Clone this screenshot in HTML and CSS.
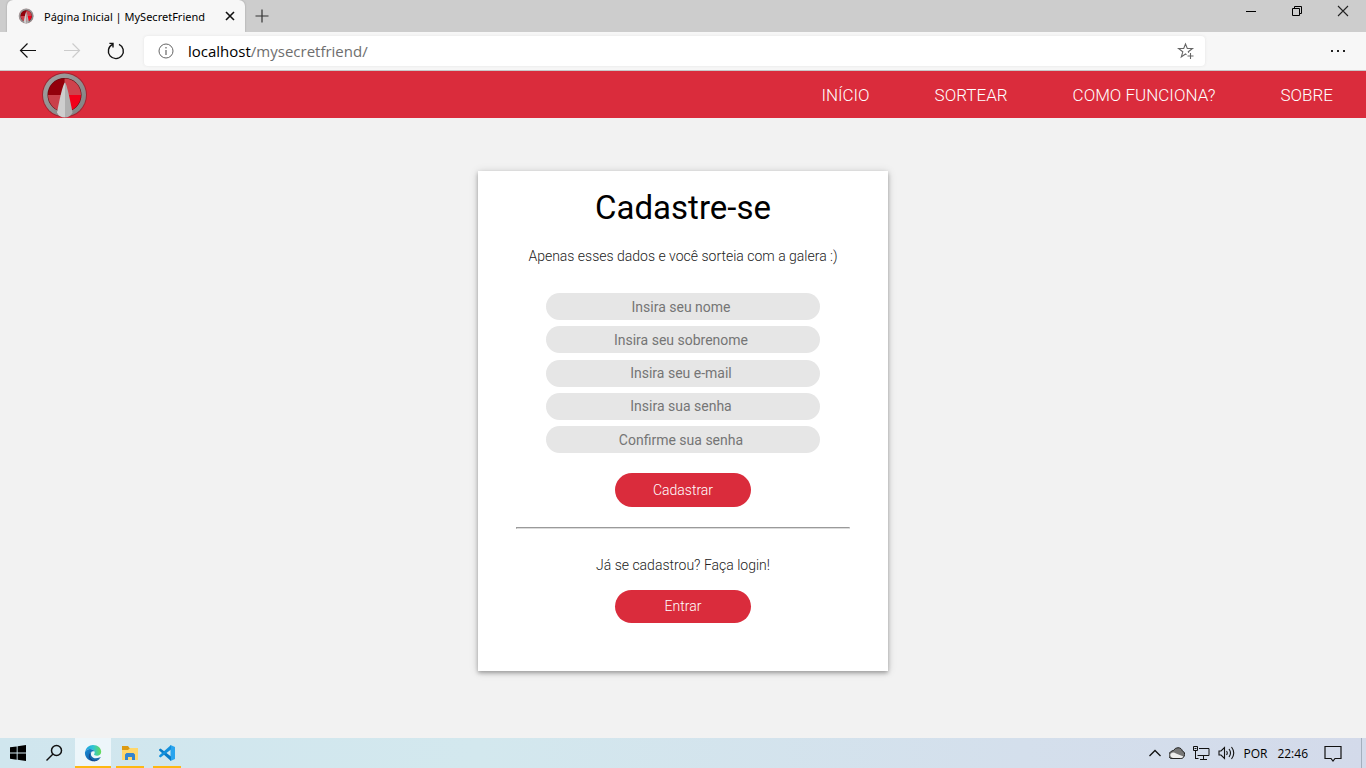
FILE: index.html
```html
<!DOCTYPE html>
<html lang="pt-BR">
<head>
<meta charset="utf-8">
<title>Página Inicial | MySecretFriend</title>
<link rel="stylesheet" href="styles.css">
</head>
<body>
<svg class="defs" width="0" height="0" aria-hidden="true">
  <defs>
    <linearGradient id="ring" x1="0" y1="0" x2="1" y2="1"><stop offset="0" stop-color="#a2a2a2"/><stop offset="1" stop-color="#808080"/></linearGradient>
    <linearGradient id="edgeTop" x1="0" y1="0" x2="1" y2="0"><stop offset="0" stop-color="#1a9de0"/><stop offset=".5" stop-color="#2fc4d4"/><stop offset="1" stop-color="#66dc55"/></linearGradient>
    <linearGradient id="edgeLow" x1="0" y1="0" x2="1" y2="1"><stop offset="0" stop-color="#1b8fd8"/><stop offset="1" stop-color="#0c4a94"/></linearGradient>
    <symbol id="compass" viewBox="0 0 48 48">
      <circle cx="24.500" cy="24" r="22.500" fill="#5b1a22" opacity=".45"/>
      <circle cx="24.500" cy="24" r="21.500" fill="url(#ring)"/>
      <circle cx="24.500" cy="24" r="17" fill="#5c070d"/>
      <path d="M24.500 24V7.500A16.500 16.500 0 0 0 8 24z" fill="#93000b"/>
      <path d="M24.500 24V7.500A16.500 16.500 0 0 1 41 24z" fill="#cf424c"/>
      <path d="M24.500 24H8A16.500 16.500 0 0 0 24.500 40.500z" fill="#c9404a"/>
      <path d="M24.500 24H41A16.500 16.500 0 0 1 24.500 40.500z" fill="#f20019"/>
      <path d="M25 11.500Q22.500 13 17 41.500 19 46.500 25 46.500z" fill="#cecece"/>
      <path d="M25 11.500Q27 13 32.500 41.500 30 46.500 25 46.500z" fill="#b0b0b0"/>
    </symbol>
  </defs>
</svg>

<div class="titlebar">
  <div class="tab">
    <svg class="favicon" viewBox="0 0 48 48"><use href="#compass"/></svg>
    <span class="tab-title">Página Inicial | MySecretFriend</span>
    <button class="icon-button tab-close" aria-label="Fechar guia"><svg width="10" height="10" viewBox="0 0 10 10"><path d="M1 1l8 8M9 1L1 9" stroke="#111" stroke-width="1.6"/></svg></button>
  </div>
  <button class="icon-button new-tab" aria-label="Nova guia"><svg width="14" height="14" viewBox="0 0 14 14"><path d="M7 .5v13M.5 7h13" stroke="#333" stroke-width="1.2"/></svg></button>
  <div class="window-controls">
    <button class="icon-button" aria-label="Minimizar"><svg width="12" height="12" viewBox="0 0 12 12"><path d="M1 6.500h10" stroke="#000"/></svg></button>
    <button class="icon-button" aria-label="Restaurar"><svg width="12" height="12" viewBox="0 0 12 12" fill="none" stroke="#000"><path d="M1.500 3.500h7v7h-7zM3.500 3V1.500h7v7H9"/></svg></button>
    <button class="icon-button" aria-label="Fechar"><svg width="12" height="12" viewBox="0 0 12 12"><path d="M1 1l10 10M11 1L1 11" stroke="#222" stroke-width="1.1"/></svg></button>
  </div>
</div>

<div class="toolbar">
  <button class="icon-button" aria-label="Voltar"><svg width="18" height="18" viewBox="0 0 18 18" fill="none" stroke="#111" stroke-width="1.2"><path d="M17 8.500H1.500M8.500 1.500l-7 7 7 7"/></svg></button>
  <button class="icon-button" aria-label="Avançar" disabled><svg width="18" height="18" viewBox="0 0 18 18" fill="none" stroke="#ccc" stroke-width="1.2"><path d="M1 8.500h15.500M9.500 1.500l7 7-7 7"/></svg></button>
  <button class="icon-button" aria-label="Atualizar"><svg width="18" height="18" viewBox="0 0 18 18" fill="none" stroke="#111" stroke-width="1.400"><path d="M12 2.300A7.500 7.500 0 1 1 5.500 2.400M2.400 1.400H6V5.400"/></svg></button>
  <div class="address">
    <svg width="16" height="16" viewBox="0 0 16 16" fill="none" stroke="#666"><circle cx="8" cy="8" r="7"/><path d="M8 7v5M8 4v1.500" stroke-width="1.200"/></svg>
    <span class="url"><span class="host">localhost</span>/mysecretfriend/</span>
    <button class="icon-button" aria-label="Adicionar aos favoritos"><svg width="18" height="18" viewBox="0 0 18 18" fill="none" stroke="#666" stroke-width="1.100"><path d="M9.500 12.700L8.500 12l-4.200 3 1.500-5.200-4.300-3.300h5.200L8.500 2l1.800 4.500h5.200l-4.200 3.300.4 1M13.500 11v6M10.500 14h6"/></svg></button>
  </div>
  <button class="icon-button menu" aria-label="Configurações e mais"><svg width="16" height="4" viewBox="0 0 16 4" fill="#222"><path d="M1 1h2v2H1zM7 1h2v2H7zM13 1h2v2h-2z"/></svg></button>
</div>

<header class="site-header">
  <a class="logo" href="#" aria-label="MySecretFriend"><svg viewBox="0 0 48 48"><use href="#compass"/></svg></a>
  <nav class="site-nav">
    <a href="#">INÍCIO</a>
    <a href="#">SORTEAR</a>
    <a href="#">COMO FUNCIONA?</a>
    <a href="#">SOBRE</a>
  </nav>
</header>

<main class="page">
  <section class="card">
    <h1>Cadastre-se</h1>
    <p class="intro">Apenas esses dados e você sorteia com a galera :)</p>
    <form class="signup">
      <div class="fields">
        <input type="text" placeholder="Insira seu nome" aria-label="Nome">
        <input type="text" placeholder="Insira seu sobrenome" aria-label="Sobrenome">
        <input type="email" placeholder="Insira seu e-mail" aria-label="E-mail">
        <input type="password" placeholder="Insira sua senha" aria-label="Senha">
        <input type="password" placeholder="Confirme sua senha" aria-label="Confirmação de senha">
      </div>
      <button class="pill" type="submit">Cadastrar</button>
    </form>
    <hr>
    <p class="login-text">Já se cadastrou? Faça login!</p>
    <button class="pill login" type="button">Entrar</button>
  </section>
</main>

<footer class="taskbar">
  <button class="task start" aria-label="Iniciar"><svg width="16" height="16" viewBox="0 0 16 16"><path d="M0 2.300L6.700 1.400V7.600H0zM7.600 1.200L16 0v7.600H7.600zM0 8.500h6.700v6.200L0 13.700zM7.600 8.500H16V16l-8.400-1.200z"/></svg></button>
  <button class="task search" aria-label="Pesquisar"><svg width="18" height="18" viewBox="0 0 18 18" fill="none" stroke="#111" stroke-width="1.500"><circle cx="11.500" cy="6.500" r="5"/><path d="M8 10l-6.500 6.500"/></svg></button>
  <button class="task running active" aria-label="Microsoft Edge"><svg width="18" height="18" viewBox="0 0 18 18">
    <path d="M1 8A8 8 0 0 1 9 1c5 0 8.200 3.200 8.200 6.700 0 2.600-1.900 4-4.200 4-2 0-3-.7-3-1.400 0-.5.700-.8.700-1.900C10.700 6.500 8.500 5 6 5 3.700 5 1.800 6.200 1 8z" fill="url(#edgeTop)"/>
    <path d="M1 8c.8-2 2.800-3 5-3 2.200 0 3.900 1.100 4.500 2.500C8 6.500 6 8.500 6 11c0 3 2.500 5.500 5.500 5.900A8.300 8.300 0 0 1 1 8z" fill="url(#edgeLow)"/>
    <path d="M7.500 8C5 10 6 15 10.500 15.800c2.500.4 4.700-.6 6-2.300-1.500 3-5 4.300-8 3.300C4.500 15 3.500 10 7.500 8z" fill="#123f86"/>
    <path d="M7.600 8C5.500 11 8.500 14.500 12 14.300c2 0 3.500-.5 4.400-1.200.3 0 .3.200.1.500C14.700 16 12.500 17 10 16.500 5 15 4.500 10 7.600 8z" fill="#1668ad"/></svg></button>
  <button class="task running" aria-label="Explorador de Arquivos"><svg width="18" height="16" viewBox="0 0 18 16">
    <path d="M1 1h6l1.500 2H16v4H1z" fill="#dc9a12"/><path d="M1 5h6l2-2h8v12H1z" fill="#ffd76a"/><path d="M4 15V9.500L5.500 8h7L14 9.500V15h-3v-3H7v3z" fill="#3485cd"/></svg></button>
  <button class="task running" aria-label="Visual Studio Code"><svg width="18" height="18" viewBox="0 0 18 18">
    <path d="M12.500 1L17 3v12l-4.500 2z" fill="#29a4ee"/><path d="M1 5.500L2.500 4.400 13 12.500V17L1.200 6.600z" fill="#087bc7"/><path d="M1 12.500l1.500 1.100L13 5.500V1L1.200 11.400z" fill="#1390dc"/></svg></button>
  <div class="tray">
    <svg width="12" height="8" viewBox="0 0 12 8" fill="none" stroke="#111" stroke-width="1.300"><path d="M.5 7L6 1.500 11.500 7"/></svg>
    <svg width="16" height="12" viewBox="0 0 16 12"><path d="M4 11.500A3.500 3.500 0 0 1 1.500 5Q3 3.500 4.500 3.500 6 .7 9 .7c2.500 0 4 1.500 4.300 3.300 2.200.5 2.900 3 1.900 5-.7 2-2 2.500-3.500 2.500z" fill="#777" stroke="#222"/><path d="M4 11A3 3 0 0 1 1.500 7Q4 4.500 7 6.500L14.500 9.500Q13 11 12 11z" fill="#eee"/></svg>
    <svg width="17" height="14" viewBox="0 0 17 14" fill="none" stroke="#111"><path d="M6 2.500h10v7H4.500M10.500 10v3M7 13.500h7M.5.500h4v4h-4zM2.500 5v8M1.500 2.500h2M2.500 12.500h3"/></svg>
    <svg width="17" height="14" viewBox="0 0 17 14" fill="none" stroke="#111" stroke-width="1.100"><path d="M1 5h2l3.500-3.500v11L3 9H1zM8.500 5q1.500 2 0 4M11 3q3 4 0 8M13.500 1q4.500 6 0 12"/></svg>
    <span class="language">POR</span>
    <span class="clock">22:46</span>
    <svg width="18" height="17" viewBox="0 0 18 17" fill="none" stroke="#111" stroke-width="1.200"><path d="M1 1.500h16v12h-6L9 16l-2-2.500H1z"/></svg>
  </div>
</footer>
</body>
</html>
```

FILE: styles.css
```css
* {
  box-sizing: border-box;
}

body {
  margin: 0;
  min-height: 100vh;
  display: flex;
  flex-direction: column;
  background: #f2f2f2;
  color: #000;
  font-family: Roboto, sans-serif;
}

svg {
  display: block;
  flex: none;
}

.defs {
  position: absolute;
}

button {
  border: 0;
  padding: 0;
  background: none;
  font: inherit;
}

.icon-button {
  display: grid;
  place-items: center;
}

/* Browser window */
.titlebar {
  display: flex;
  height: 32px;
  background: #cdcdcd;
}

.tab {
  display: flex;
  align-items: center;
  width: 238px;
  margin-left: 7px;
  padding: 0 10px 0 11px;
  border-radius: 6px 6px 0 0;
  background: #f7f7f7;
  box-shadow: 0 0 2px #999;
  clip-path: inset(0 -3px);
}

.favicon {
  width: 16px;
  height: 16px;
}

.tab-title {
  flex: 1;
  margin-left: 10px;
  font: 11px "Noto Sans", sans-serif;
  white-space: nowrap;
}

.new-tab {
  width: 34px;
}

.window-controls {
  display: flex;
  gap: 34px;
  height: 22px;
  margin-left: auto;
  padding-right: 17px;
}

.toolbar {
  display: flex;
  align-items: center;
  height: 39px;
  padding: 0 19px;
  border-bottom: 1px solid #c8c8c8;
  background: #f7f7f7;
}

.toolbar > .icon-button {
  width: 18px;
  margin-right: 26px;
}

.address {
  display: flex;
  flex: 1;
  align-items: center;
  height: 30px;
  margin: 0 124px 0 -7px;
  padding: 0 10px 0 14px;
  border-radius: 4px;
  background: #fff;
  box-shadow: 0 0 3px #e2e2e2;
}

.url {
  flex: 1;
  margin-left: 14px;
  color: #6e6e6e;
  font: 15px "Open Sans", sans-serif;
}

.host {
  color: #000;
}

.toolbar > .menu {
  margin-right: 0;
}

/* Site */
.site-header {
  display: flex;
  align-items: center;
  justify-content: space-between;
  height: 47px;
  padding: 0 33px 0 40px;
  background: #da2c3c;
}

.logo svg {
  width: 48px;
  height: 48px;
}

.site-nav {
  display: flex;
  gap: 65px;
}

.site-nav a {
  color: #fff;
  font-size: 17px;
  font-weight: 300;
  text-decoration: none;
}

.page {
  flex: 1;
  padding: 53px 0 67px;
}

.card {
  display: flex;
  flex-direction: column;
  align-items: center;
  width: 30%;
  min-width: 360px;
  margin: 0 auto;
  padding: 17px 38px 48px;
  background: #fff;
  box-shadow: 0 2px 4px rgba(0, 0, 0, .3), 0 1px 9px rgba(0, 0, 0, .14);
}

h1 {
  margin: 0;
  font-size: 33px;
  font-weight: 400;
  line-height: 40px;
}

.intro,
.login-text {
  margin: 0;
  color: #222;
  font-size: 14px;
  font-weight: 300;
  line-height: 20px;
}

.intro {
  margin-top: 18px;
}

.signup {
  display: flex;
  flex-direction: column;
  align-items: center;
  width: 82%;
  margin-top: 27px;
}

.fields {
  display: flex;
  flex-direction: column;
  justify-content: space-between;
  width: 100%;
  height: 160px;
}

.fields input {
  width: 100%;
  height: 27px;
  padding: 0 4px 0 0;
  border: 0;
  border-radius: 14px;
  background: #e6e6e6;
  font: 14px Roboto, sans-serif;
  text-align: center;
}

.fields input::placeholder {
  color: #757575;
}

.pill {
  width: 136px;
  height: 34px;
  margin-top: 20px;
  border-radius: 17px;
  background: #da2c3c;
  color: #fff;
  font-size: 14px;
  font-weight: 300;
}

hr {
  width: 100%;
  margin: 20px 0 26px;
  border: 1px solid;
  border-color: #9a9a9a #dcdcdc #dcdcdc #9a9a9a;
}

.login {
  height: 33px;
  margin-top: 15px;
  padding-bottom: 2px;
}

/* Taskbar */
.taskbar {
  display: flex;
  height: 30px;
  background: linear-gradient(90deg, #d0e6ee, #d3e8ee 35%, #d4dfec 75%, #d3daea);
}

.task {
  display: grid;
  place-items: center;
  width: 28px;
  margin-right: 9px;
  padding-top: 2px;
  border-bottom: 2px solid transparent;
}

.start {
  width: 36px;
  margin-right: 0;
}

.search {
  width: 36px;
  margin-right: 3px;
}

.running {
  border-color: #fdb813;
}

.active {
  width: 36px;
  margin-right: 5px;
  background: #edf6fa;
}

.tray {
  display: flex;
  align-items: center;
  gap: 8px;
  margin-left: auto;
  padding-right: 19px;
  margin-right: 4px;
  border-right: 1px solid #a4afbd;
  font: 12px "Open Sans", sans-serif;
}

.clock {
  margin: 0 8px 0 2px;
}
```
